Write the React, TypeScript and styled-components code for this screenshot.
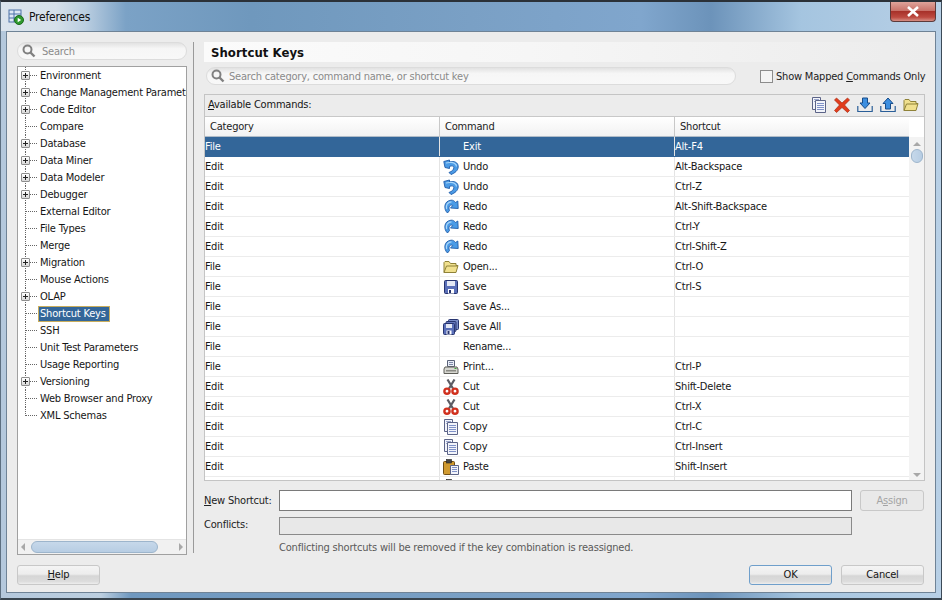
import React from "react";
import styled, { createGlobalStyle } from "styled-components";

const GlobalStyle = createGlobalStyle`
  html, body { margin: 0; padding: 0; background: #fff; }
  body { font-family: "DejaVu Sans Condensed", "DejaVu Sans", "Liberation Sans", sans-serif; font-stretch: condensed; font-size: 11px; letter-spacing: -0.2px; color: #161616; }
  * { box-sizing: border-box; }
`;

const Win = styled.div`
  width: 942px;
  height: 600px;
  display: flex;
  flex-direction: column;
  overflow: hidden;
  border-top: 2px solid #2b3138;
  border-left: 1px solid #5d6f80;
  border-right: 1px solid #3c4a58;
  border-bottom: 2px solid #39454f;
  padding: 0 5px 5px;
  background: linear-gradient(90deg, #b4c8dc 0, #bccfe0 100px, #6f98bf 130px, #7aa0c5 480px, #80a6cd 640px, #6c93ba 710px, #a5c5e0 800px, #b8d0e6 100%);
`;

const TitleBar = styled.div`
  height: 29px;
  flex: none;
  display: flex;
  align-items: center;
  gap: 5px;
  margin: 0 -5px;
  padding: 0 5px 0 7px;
  background: linear-gradient(90deg, #dbe4ed 0, #d6e0ea 55px, #b9cde0 85px, #7ba2c6 125px, #6f98bd 250px, #7aa0c5 470px, #80a6cd 640px, #6c93ba 710px, #a5c5e0 800px, #b8d0e6 100%);
`;

const TitleText = styled.div`
  font-size: 12px;
  color: #111;
  flex: 1;
`;

const CloseButton = styled.div`
  width: 46px;
  height: 20px;
  margin: -9px 0 0 0;
  border: 1px solid #5c3a3a;
  border-top: none;
  border-radius: 0 0 4px 4px;
  background: linear-gradient(#dfa39a 0, #c9736a 45%, #a8322a 50%, #bd4a40 80%, #d68f85 100%);
  display: flex;
  align-items: center;
  justify-content: center;
`;

const Panel = styled.div`
  flex: 1;
  min-height: 0;
  background: #ececec;
  border: 1px solid #6f8396;
  display: flex;
  flex-direction: column;
  padding: 10px 10px 8px 10px;
`;

const Main = styled.div`
  height: 513px;
  flex: none;
  display: flex;
`;

const LeftCol = styled.div`
  width: 170px;
  flex: none;
  display: flex;
  flex-direction: column;
  gap: 6px;
`;

const Divider = styled.div`
  width: 1px;
  height: 511px;
  background: #9a9a9a;
  margin: 0 10px 0 6px;
  flex: none;
`;

const RightCol = styled.div`
  width: 721px;
  flex: none;
  display: flex;
  flex-direction: column;
`;

const SearchPill = styled.div<{ $h: number }>`
  height: ${p => p.$h}px;
  background: linear-gradient(#e2e2e2, #f6f6f6 35%, #f8f8f8);
  border: 1px solid #dcdcdc;
  border-radius: 9px;
  display: flex;
  align-items: center;
  gap: 6px;
  padding-left: 4px;
  color: #8a8a8a;
  font-size: 11px;
`;

const TreeBox = styled.div`
  flex: 1;
  min-height: 0;
  background: #fff;
  border: 1px solid #a0a0a0;
  display: flex;
  flex-direction: column;
`;

const TreeList = styled.div`
  flex: 1;
  min-height: 0;
  overflow: hidden;
`;

const TreeRow = styled.div`
  height: 17px;
  display: flex;
  align-items: center;
  white-space: nowrap;
  overflow: hidden;
`;

const Gutter = styled.div<{ $last?: boolean }>`
  width: 19px;
  height: 17px;
  flex: none;
  position: relative;
  &::before {
    content: "";
    position: absolute;
    left: 7px;
    top: 0;
    height: ${p => (p.$last ? 9 : 17)}px;
    border-left: 1px dotted #666;
  }
  &::after {
    content: "";
    position: absolute;
    left: 8px;
    top: 8px;
    width: 11px;
    border-top: 1px dotted #666;
  }
`;

const Expander = styled.div`
  position: absolute;
  z-index: 1;
  left: 3px;
  top: 4px;
  width: 9px;
  height: 9px;
  border: 1px solid #8e8e8e;
  border-radius: 1px;
  background: linear-gradient(#fff, #d8d8d8);
  &::before {
    content: "";
    position: absolute;
    left: 1px;
    top: 3px;
    width: 5px;
    height: 1px;
    background: #222;
  }
  &::after {
    content: "";
    position: absolute;
    left: 3px;
    top: 1px;
    width: 1px;
    height: 5px;
    background: #222;
  }
`;

const TreeLabel = styled.div<{ $sel?: boolean }>`
  padding: 0 ${p => (p.$sel ? 3 : 1)}px 1px 1px;
  margin-left: 1px;
  height: 16px;
  line-height: 13px;
  background: ${p => (p.$sel ? "#336699" : "transparent")};
  color: ${p => (p.$sel ? "#fff" : "#161616")};
  border: 1px solid ${p => (p.$sel ? "#c9ad5c" : "transparent")};
`;

const HScroll = styled.div`
  height: 15px;
  flex: none;
  background: #f1f1f1;
  border-top: 1px solid #e4e4e4;
  display: flex;
  align-items: center;
  padding: 0 3px;
  gap: 6px;
`;

const ScrollThumbH = styled.div`
  width: 127px;
  height: 12px;
  border: 1px solid #9db5cc;
  border-radius: 6px;
  background: linear-gradient(#c6d8ea, #b7cde3);
`;

const ArrowSpacer = styled.div`
  flex: 1;
`;

const ArrowH = styled.div<{ $dir: "l" | "r" }>`
  width: 0;
  height: 0;
  border-top: 4px solid transparent;
  border-bottom: 4px solid transparent;
  ${p => (p.$dir === "l" ? "border-right: 4px solid #a8a8a8;" : "border-left: 4px solid #a8a8a8;")}
`;

const PageTitle = styled.div`
  height: 20px;
  flex: none;
  background: linear-gradient(90deg, #fbfbfb, #f6f6f6 45%, #ececec);
  font-size: 13px;
  font-weight: 700;
  letter-spacing: 0.05px;
  color: #111;
  padding-left: 7px;
  line-height: 21px;
`;

const SearchLine = styled.div`
  display: flex;
  align-items: center;
  margin-top: 4px;
  height: 20px;
  flex: none;
`;

const SearchWide = styled(SearchPill)`
  width: 530px;
  flex: none;
  margin-left: 2px;
  gap: 4px;
`;

const CheckRow = styled.div`
  display: flex;
  align-items: center;
  margin-left: 24px;
  gap: 3px;
  color: #222;
  white-space: nowrap;
`;

const CheckBox = styled.div`
  width: 13px;
  height: 13px;
  background: #f4f4f4;
  border: 1px solid #8c8c8c;
`;

const TablePanel = styled.div`
  margin-top: 8px;
  height: 387px;
  flex: none;
  border: 1px solid #c4c4c4;
  display: flex;
  flex-direction: column;
  background: #fff;
`;

const TableToolbar = styled.div`
  height: 22px;
  flex: none;
  background: #ececec;
  border-bottom: 1px solid #c8c8c8;
  display: flex;
  align-items: center;
  padding: 0 3px 2px;
`;

const ToolIcons = styled.div`
  margin-left: auto;
  display: flex;
  gap: 7px;
  padding-right: 2px;
`;

const TableBody = styled.div`
  flex: 1;
  min-height: 0;
  display: flex;
`;

const TableMain = styled.div`
  width: 704px;
  flex: none;
  display: flex;
  flex-direction: column;
  overflow: hidden;
`;

const TableHead = styled.div`
  height: 20px;
  flex: none;
  display: grid;
  grid-template-columns: 235px 235px 234px;
  background: linear-gradient(#fff, #f2f2f2);
  border-bottom: 1px solid #b0bcc8;
`;

const HeadCell = styled.div`
  padding-left: 5px;
  line-height: 20px;
  border-right: 1px solid #c8c8c8;
  color: #222;
  &:last-child { border-right: none; }
`;

const Row = styled.div<{ $sel?: boolean }>`
  height: 20px;
  flex: none;
  display: grid;
  grid-template-columns: 235px 235px 234px;
  background: ${p => (p.$sel ? "#336699" : "#fff")};
  color: ${p => (p.$sel ? "#fff" : "#161616")};
  border-bottom: 1px solid ${p => (p.$sel ? "#336699" : "#ececec")};
`;

const Cell = styled.div`
  line-height: 18px;
  border-right: 1px solid #e4e4e4;
  white-space: nowrap;
  display: flex;
  align-items: center;
  &:last-child { border-right: none; }
`;

const CmdCell = styled(Cell)`
  padding-left: 3px;
  gap: 4px;
`;

const IconSlot = styled.div`
  width: 16px;
  height: 16px;
  flex: none;
`;

const VScroll = styled.div`
  flex: 1;
  background: #f3f3f3;
  display: flex;
  flex-direction: column;
  align-items: center;
`;

const VScrollHeadFill = styled.div`
  height: 20px;
  width: 100%;
  flex: none;
  background: #fff;
`;

const ArrowV = styled.div<{ $dir: "u" | "d" }>`
  width: 0;
  height: 0;
  margin: 5px 0 3px;
  border-left: 4px solid transparent;
  border-right: 4px solid transparent;
  ${p => (p.$dir === "u" ? "border-bottom: 4px solid #a8a8a8;" : "border-top: 4px solid #a8a8a8;")}
`;

const ScrollThumbV = styled.div`
  width: 12px;
  height: 14px;
  border: 1px solid #9db5cc;
  border-radius: 6px;
  background: linear-gradient(90deg, #c6d8ea, #b7cde3);
`;

const FormGrid = styled.div`
  margin-top: 9px;
  display: grid;
  grid-template-columns: 75px 573px 73px;
  grid-template-rows: 21px 18px 14px;
  row-gap: 6px;
  align-items: center;
`;

const FormLabel = styled.div<{ $lh: number }>`
  color: #222;
  align-self: start;
  line-height: ${p => p.$lh}px;
`;

const FieldActive = styled.div`
  height: 21px;
  width: 573px;
  background: #fff;
  border: 1px solid #7a7a7a;
`;

const FieldDisabled = styled.div`
  height: 18px;
  width: 573px;
  background: #e8e8e8;
  border: 1px solid #8a8a8a;
  grid-column: 2 / 3;
`;

const Note = styled.div`
  grid-column: 2 / 4;
  color: #5a5a5a;
  line-height: 14px;
`;

const Btn = styled.div<{ $w: number; $h?: number; $off?: boolean; $def?: boolean }>`
  width: ${p => p.$w}px;
  height: ${p => p.$h ?? 20}px;
  border: 1px solid ${p => (p.$def ? "#6f9fcb" : "#c8c8c8")};
  border-radius: 3px;
  background: ${p => (p.$off ? "#e9e9e9" : "linear-gradient(#f4f4f4, #ededed 45%, #d6d6d6 55%, #dcdcdc 85%, #ededed)")};
  color: ${p => (p.$off ? "#a4a4a4" : "#161616")};
  display: flex;
  align-items: center;
  justify-content: center;
  padding-bottom: 1px;
`;

const AssignBtn = styled(Btn)`
  margin-left: 8px;
`;

const Footer = styled.div`
  margin-top: 10px;
  display: flex;
  gap: 9px;
  padding-right: 1px;
`;

const FooterSpacer = styled.div`
  flex: 1;
`;

const Key = styled.span`
  text-decoration: underline;
`;

/* icons, all 16x16 */
const Svg = ({ children, size = 16 }: { children: React.ReactNode; size?: number }) => (
  <svg width={size} height={size} viewBox="0 0 16 16" style={{ display: "block" }}>{children}</svg>
);

const UndoIcon = () => (
  <Svg>
    <path d="M0.8 2.5 L6.5 1 V3 C11 1.5 15.5 3.5 15.2 8 C15 11.5 12 14 8 15.5 L6 13.5 C9 12.5 11 10.5 10.8 8.5 C10.5 6.5 8.5 6.5 6.5 7.5 V9.5 L2 8.5 Z" fill="#4b9be6" stroke="#1f5ba8" strokeWidth="0.9" strokeLinejoin="round" />
    <path d="M3 4 L6.5 3.5 C10 3 13.5 4.5 13.5 7.5" fill="none" stroke="#a9d6fa" strokeWidth="1.2" />
  </Svg>
);
const RedoIcon = () => (
  <Svg>
    <path d="M4.5 14 C0.5 10.5 0.5 2 8 1.2 C10 1 11.5 2 12.5 3.5 L14.8 2 L15.2 9.5 L7.5 9 L9.8 6.5 C7.5 5 4.8 7.5 6.5 11.5 Z" fill="#4b9be6" stroke="#1f5ba8" strokeWidth="0.9" strokeLinejoin="round" />
    <path d="M3.5 10 C2.5 6 5 2.8 8.5 2.8" fill="none" stroke="#a9d6fa" strokeWidth="1.2" />
  </Svg>
);
const FolderIcon = () => (
  <Svg>
    <path d="M1 13.5 V3.5 L2 2.5 H6 L7.5 4.5 H13 V6.5 H15 L13 13.5 Z" fill="#f0e08e" stroke="#8f8238" strokeWidth="1" strokeLinejoin="round" />
    <path d="M1 13.5 L3.5 7 H15" fill="none" stroke="#8f8238" strokeWidth="1" />
  </Svg>
);
const SaveIcon = () => (
  <Svg>
    <rect x="1.5" y="1.5" width="13" height="13" rx="1" fill="#5a6fb8" stroke="#27346f" />
    <rect x="4" y="2" width="8" height="5" fill="#e4e8f4" />
    <rect x="5" y="10" width="6" height="4.5" fill="#fff" />
    <rect x="6" y="11" width="2" height="3" fill="#27346f" />
  </Svg>
);
const SaveAllIcon = () => (
  <Svg>
    <rect x="5.5" y="0.5" width="10" height="10" rx="1" fill="#7a8cc8" stroke="#27346f" />
    <rect x="3" y="2.5" width="10" height="10" rx="1" fill="#6679bd" stroke="#27346f" />
    <rect x="0.5" y="4.5" width="11" height="11" rx="1" fill="#5a6fb8" stroke="#27346f" />
    <rect x="3" y="5" width="6" height="4" fill="#e4e8f4" />
    <rect x="3.5" y="11.5" width="5" height="4" fill="#fff" />
    <rect x="4.5" y="12" width="2" height="3" fill="#27346f" />
  </Svg>
);
const PrintIcon = () => (
  <Svg>
    <path d="M4.5 1.5 H11.5 V7.5 H4.5 Z" fill="#e8ecf6" stroke="#5a6278" />
    <path d="M6 3.5 H10 M6 5.5 H10" stroke="#7f8aa8" />
    <path d="M2 8 H14 L15 10 V14.5 H1 V10 Z" fill="#d6d6d0" stroke="#5e5e58" strokeLinejoin="round" />
    <rect x="3" y="11" width="10" height="1.5" fill="#8a8a84" />
    <rect x="11.5" y="9" width="2" height="1" fill="#3aa63a" />
  </Svg>
);
const CutIcon = () => (
  <Svg>
    <path d="M4.5 0.5 L10 9.5 M11.5 0.5 L6 9.5" stroke="#5c5c64" strokeWidth="2.2" />
    <circle cx="4" cy="12.2" r="2.6" fill="#fff" stroke="#d0301e" strokeWidth="2.4" />
    <circle cx="12" cy="12.2" r="2.6" fill="#fff" stroke="#d0301e" strokeWidth="2.4" />
  </Svg>
);
const CopyIcon = () => (
  <Svg>
    <path d="M1.5 0.5 H9.5 V12.5 H1.5 Z" fill="#f2f4fa" stroke="#5c6488" />
    <path d="M3 2.5 H8 M3 4.5 H8" stroke="#9aa6cc" />
    <path d="M4.5 3.5 H14.5 V15.5 H4.5 Z" fill="#f2f4fa" stroke="#5c6488" />
    <path d="M6 6.5 H13 M6 8.5 H13 M6 10.5 H13 M6 12.5 H13" stroke="#7f91c8" />
  </Svg>
);
const PasteIcon = () => (
  <Svg>
    <rect x="0.5" y="2.5" width="11" height="13" rx="1" fill="#d09a30" stroke="#6e4d14" />
    <rect x="3.5" y="0.5" width="5" height="3.5" fill="#444" stroke="#222" strokeWidth="0.6" />
    <path d="M7.5 6.5 H15.5 V15.5 H7.5 Z" fill="#f2f4fa" stroke="#5c6488" />
    <path d="M9 8.5 H14 M9 10.5 H14 M9 12.5 H14" stroke="#7f91c8" />
  </Svg>
);
const ImportIcon = () => (
  <Svg>
    <path d="M0.8 9 V14.5 H15.2 V9" fill="none" stroke="#2a5e98" strokeWidth="1.2" />
    <path d="M5.5 1 H10.5 V6 H13 L8 11.5 L3 6 H5.5 Z" fill="#3d8fe0" stroke="#184d8a" strokeLinejoin="round" />
  </Svg>
);
const ExportIcon = () => (
  <Svg>
    <path d="M0.8 9 V14.5 H15.2 V9" fill="none" stroke="#2a5e98" strokeWidth="1.2" />
    <path d="M5.5 12 H10.5 V6.5 H13 L8 1 L3 6.5 H5.5 Z" fill="#3d8fe0" stroke="#184d8a" strokeLinejoin="round" />
  </Svg>
);
const DeleteIcon = () => (
  <Svg>
    <path d="M2.5 1 L8 6 L13.5 1 L15.5 3 L10.5 8 L15.5 13.5 L13.5 15.5 L8 10.5 L2.5 15.5 L0.5 13.5 L5.5 8 L0.5 3 Z" fill="#e23c1c" stroke="#a82c12" strokeWidth="0.7" strokeLinejoin="round" />
  </Svg>
);
const SearchGlass = () => (
  <svg width="14" height="14" viewBox="0 0 14 14" style={{ display: "block", flex: "none" }}>
    <circle cx="5.5" cy="5.5" r="4" fill="none" stroke="#808080" strokeWidth="2" />
    <path d="M8.5 8.5 L12.5 12.5" stroke="#808080" strokeWidth="2.4" />
  </svg>
);
const PrefsIcon = () => (
  <svg width="16" height="16" viewBox="0 0 16 16" style={{ display: "block", flex: "none" }}>
    <rect x="1" y="1" width="12" height="12" fill="#dfe8f4" stroke="#4d72a8" />
    <path d="M1 5 H13 M1 9 H8 M6 1 V13" stroke="#4d72a8" />
    <circle cx="11" cy="11" r="4.5" fill="#2f9a2f" stroke="#1b6a1b" />
    <path d="M9.7 8.8 L13.2 11 L9.7 13.2 Z" fill="#fff" />
  </svg>
);

const icons: Record<string, React.FC> = {
  undo: UndoIcon, redo: RedoIcon, open: FolderIcon, save: SaveIcon, saveall: SaveAllIcon,
  print: PrintIcon, cut: CutIcon, copy: CopyIcon, paste: PasteIcon,
};

const treeItems: [string, boolean][] = [
  ["Environment", true], ["Change Management Parameters", true], ["Code Editor", true], ["Compare", false],
  ["Database", true], ["Data Miner", true], ["Data Modeler", true], ["Debugger", true],
  ["External Editor", false], ["File Types", false], ["Merge", false], ["Migration", true],
  ["Mouse Actions", false], ["OLAP", true], ["Shortcut Keys", false], ["SSH", false],
  ["Unit Test Parameters", false], ["Usage Reporting", false], ["Versioning", true],
  ["Web Browser and Proxy", false], ["XML Schemas", false],
];

const rows: [string, string, string, string?][] = [
  ["File", "Exit", "Alt-F4"],
  ["Edit", "Undo", "Alt-Backspace", "undo"],
  ["Edit", "Undo", "Ctrl-Z", "undo"],
  ["Edit", "Redo", "Alt-Shift-Backspace", "redo"],
  ["Edit", "Redo", "Ctrl-Y", "redo"],
  ["Edit", "Redo", "Ctrl-Shift-Z", "redo"],
  ["File", "Open...", "Ctrl-O", "open"],
  ["File", "Save", "Ctrl-S", "save"],
  ["File", "Save As...", ""],
  ["File", "Save All", "", "saveall"],
  ["File", "Rename...", ""],
  ["File", "Print...", "Ctrl-P", "print"],
  ["Edit", "Cut", "Shift-Delete", "cut"],
  ["Edit", "Cut", "Ctrl-X", "cut"],
  ["Edit", "Copy", "Ctrl-C", "copy"],
  ["Edit", "Copy", "Ctrl-Insert", "copy"],
  ["Edit", "Paste", "Shift-Insert", "paste"],
  ["", "", "", "paste"],
];

export default function App() {
  return (
    <Win>
      <GlobalStyle />
      <TitleBar>
        <PrefsIcon />
        <TitleText>Preferences</TitleText>
        <CloseButton>
          <svg width="14" height="11" viewBox="0 0 14 11">
            <path d="M2 1 L12 10 M12 1 L2 10" stroke="#fff" strokeWidth="2.6" />
          </svg>
        </CloseButton>
      </TitleBar>
      <Panel>
        <Main>
          <LeftCol>
            <SearchPill $h={18}>
              <SearchGlass />
              Search
            </SearchPill>
            <TreeBox>
              <TreeList>
                {treeItems.map(([name, expandable], i) => (
                  <TreeRow key={name}>
                    <Gutter $last={i === treeItems.length - 1}>
                      {expandable && <Expander />}
                    </Gutter>
                    <TreeLabel $sel={name === "Shortcut Keys"}>{name}</TreeLabel>
                  </TreeRow>
                ))}
              </TreeList>
              <HScroll>
                <ArrowH $dir="l" />
                <ScrollThumbH />
                <ArrowSpacer />
                <ArrowH $dir="r" />
              </HScroll>
            </TreeBox>
          </LeftCol>
          <Divider />
          <RightCol>
            <PageTitle>Shortcut Keys</PageTitle>
            <SearchLine>
              <SearchWide $h={18}>
                <SearchGlass />
                Search category, command name, or shortcut key
              </SearchWide>
              <CheckRow>
                <CheckBox />
                <span>Show Mapped <Key>C</Key>ommands Only</span>
              </CheckRow>
            </SearchLine>
            <TablePanel>
              <TableToolbar>
                <span><Key>A</Key>vailable Commands:</span>
                <ToolIcons>
                  <CopyIcon />
                  <DeleteIcon />
                  <ImportIcon />
                  <ExportIcon />
                  <FolderIcon />
                </ToolIcons>
              </TableToolbar>
              <TableBody>
                <TableMain>
                  <TableHead>
                    <HeadCell>Category</HeadCell>
                    <HeadCell>Command</HeadCell>
                    <HeadCell>Shortcut</HeadCell>
                  </TableHead>
                  {rows.map(([cat, cmd, key, icon], i) => {
                    const Icon = icon ? icons[icon] : null;
                    return (
                      <Row key={i} $sel={i === 0}>
                        <Cell>{cat}</Cell>
                        <CmdCell>
                          <IconSlot>{Icon && <Icon />}</IconSlot>
                          {cmd}
                        </CmdCell>
                        <Cell>{key}</Cell>
                      </Row>
                    );
                  })}
                </TableMain>
                <VScroll>
                  <VScrollHeadFill />
                  <ArrowV $dir="u" />
                  <ScrollThumbV />
                  <ArrowSpacer />
                  <ArrowV $dir="d" />
                </VScroll>
              </TableBody>
            </TablePanel>
            <FormGrid>
              <FormLabel $lh={21}><Key>N</Key>ew Shortcut:</FormLabel>
              <FieldActive />
              <AssignBtn $w={64} $h={21} $off>A<Key>s</Key>sign</AssignBtn>
              <FormLabel $lh={16}>Conflicts:</FormLabel>
              <FieldDisabled />
              <div />
              <div />
              <Note>Conflicting shortcuts will be removed if the key combination is reassigned.</Note>
            </FormGrid>
          </RightCol>
        </Main>
        <Footer>
          <Btn $w={83}><span><Key>H</Key>elp</span></Btn>
          <FooterSpacer />
          <Btn $w={83} $def>OK</Btn>
          <Btn $w={83}>Cancel</Btn>
        </Footer>
      </Panel>
    </Win>
  );
}
